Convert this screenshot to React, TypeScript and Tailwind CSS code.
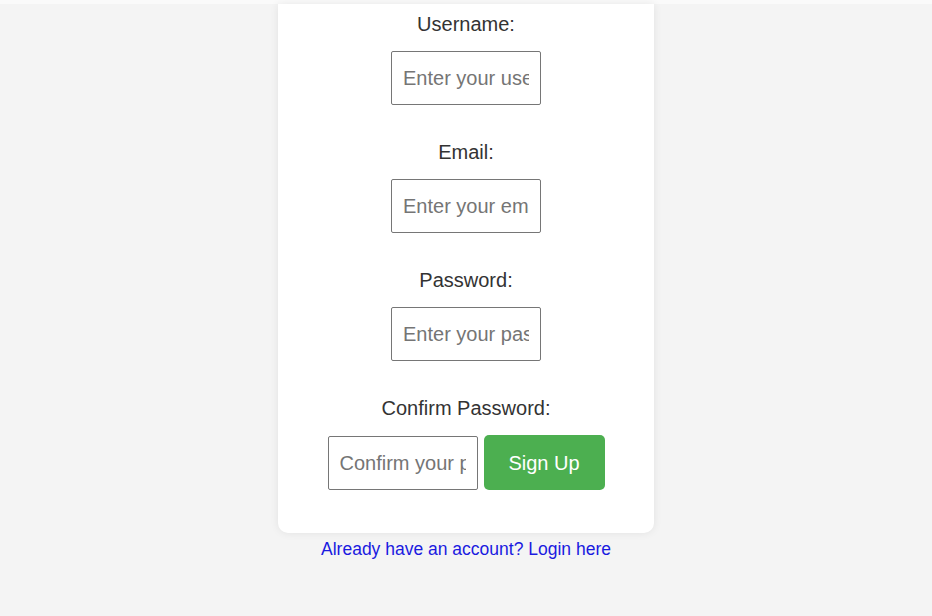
function Field({ label, placeholder, first }: { label: string; placeholder: string; first?: boolean }) {
    return (
        <div className={first ? '' : 'mt-[36px]'}>
            <label className="block text-[20px] leading-[23px] text-[#333]">{label}</label>
            <input
                type="text"
                placeholder={placeholder}
                className="mt-[15px] w-[150px] h-[54px] px-[11px] border border-[#767676] rounded-[2px] text-[20px] text-[#333] placeholder:text-[#757575] outline-none bg-white"
            />
        </div>
    );
}

export default function App() {
    return (
        <div
            className="min-h-screen bg-[#f4f4f4] border-t-4 border-[#fafafa] flex flex-col items-center"
            style={{ fontFamily: '"Liberation Sans", Arial, sans-serif' }}
        >
            <form className="w-[376px] bg-white rounded-b-[10px] shadow-[0_0_8px_rgba(0,0,0,0.08)] pt-[9px] pb-[43px] flex flex-col items-center text-center">
                <Field first label="Username:" placeholder="Enter your username" />
                <Field label="Email:" placeholder="Enter your email" />
                <Field label="Password:" placeholder="Enter your password" />
                <div className="mt-[36px] flex flex-col items-center">
                    <label className="block text-[20px] leading-[23px] text-[#333]">Confirm Password:</label>
                    <div className="mt-[15px] flex items-end gap-[6px]">
                        <input
                            type="password"
                            placeholder="Confirm your password"
                            className="w-[150px] h-[54px] px-[11px] border border-[#767676] rounded-[2px] text-[20px] text-[#333] placeholder:text-[#757575] outline-none bg-white"
                        />
                        <button
                            type="button"
                            className="w-[121px] h-[55px] bg-[#4caf50] text-white text-[20px] rounded-[5px]"
                        >
                            Sign Up
                        </button>
                    </div>
                </div>
            </form>
            <a href="#" className="mt-[6px] text-[17.5px] leading-[21px] text-[#1a1ae0]">
                Already have an account? Login here
            </a>
        </div>
    );
}
